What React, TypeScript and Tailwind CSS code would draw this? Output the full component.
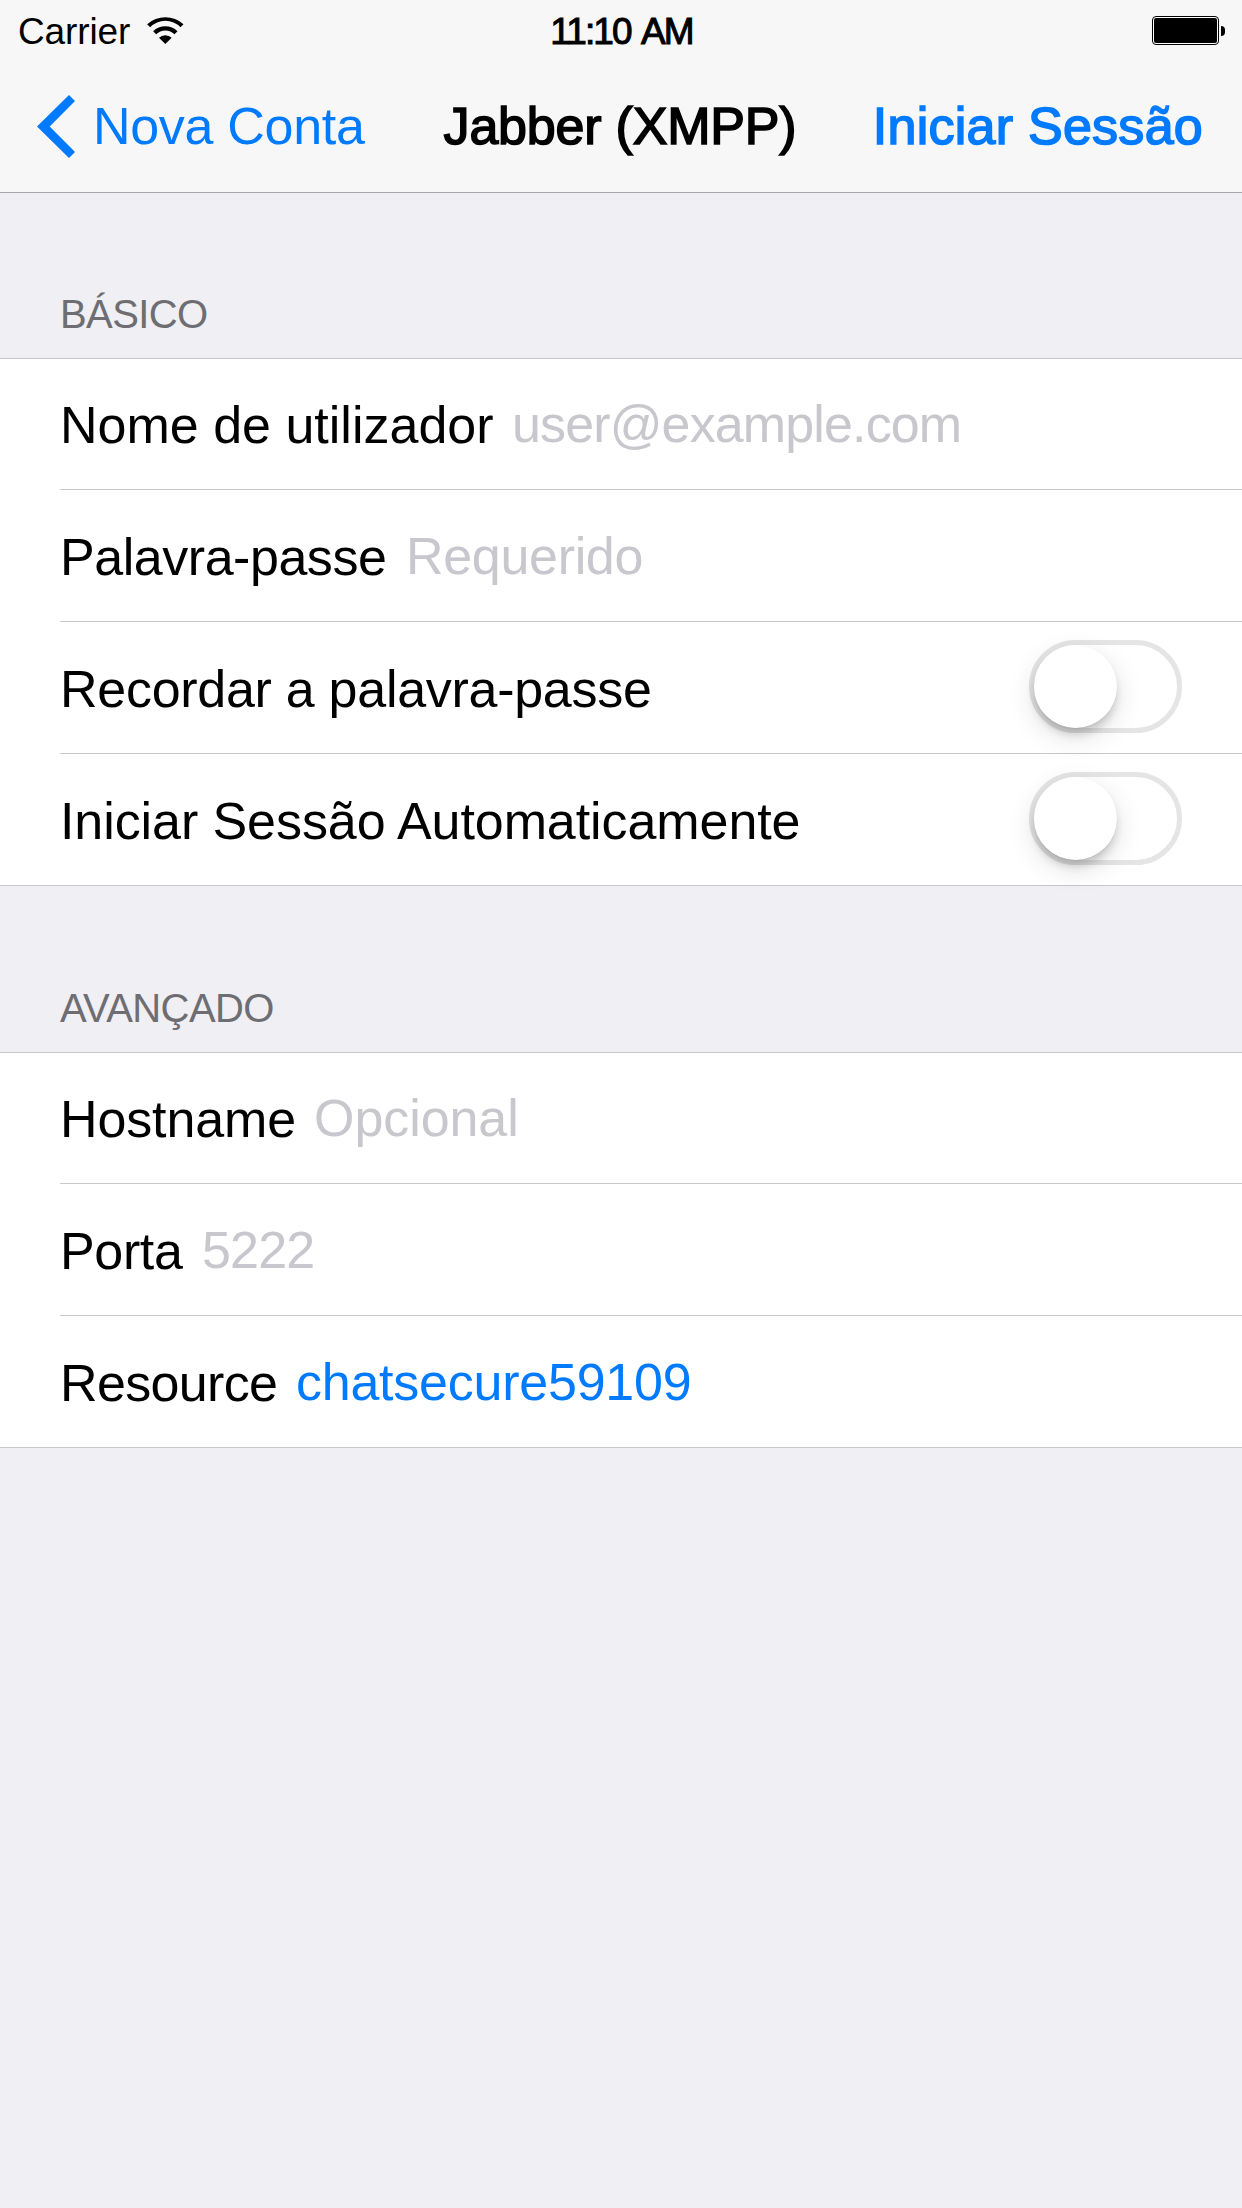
import React from "react";

function WifiIcon() {
  return (
    <svg className="h-[27px] w-[37px]" viewBox="0 0 111 81" aria-hidden="true">
      <path d="M0.5 22 A80 80 0 0 1 109.5 22 L100.5 31 A63 63 0 0 0 9.5 31 Z" />
      <path d="M18.5 43 A51 51 0 0 1 91.5 43 L82.5 52 A38 38 0 0 0 27.5 52 Z" />
      <path d="M36 62.5 A27 27 0 0 1 74 62.5 L55 81 Z" />
    </svg>
  );
}

function Battery() {
  return (
    <div className="flex items-center gap-[2px]">
      <div className="h-[29px] w-[67px] rounded-[4px] border border-black bg-white p-px">
        <div className="h-full w-full rounded-[2px] bg-black" />
      </div>
      <div className="h-[10px] w-[4px] rounded-r-[4px] bg-black" />
    </div>
  );
}

function Switch() {
  return (
    <div
      role="switch"
      aria-checked={false}
      className="mb-[2px] h-[93px] w-[153px] rounded-full border-[5px] border-[#e5e5e5]"
    >
      <div className="h-[83px] w-[83px] rounded-full bg-white shadow-[0_9px_28px_rgba(0,0,0,0.13),0_7px_8px_-1px_rgba(0,0,0,0.16),0_1px_1px_rgba(0,0,0,0.06)]" />
    </div>
  );
}

type RowProps = {
  label: string;
  labelClass: string;
  heightClass?: string;
  value?: string;
  valueClass?: string;
  toggle?: boolean;
  last?: boolean;
};

function Row({ label, labelClass, heightClass = "h-[132px]", value, valueClass = "", toggle, last }: RowProps) {
  return (
    <div className={last ? "border-b border-[#c8c7cc]" : "pl-[60px]"}>
      <div
        className={`flex items-center pr-[60px] ${
          last ? "h-[131px] pl-[60px]" : `${heightClass} border-b border-[#c8c7cc]`
        }`}
      >
        <span className={`shrink-0 pt-[2px] whitespace-nowrap ${labelClass}`}>{label}</span>
        {value && <span className={`whitespace-nowrap ${valueClass}`}>{value}</span>}
        {toggle && (
          <div className="ml-auto">
            <Switch />
          </div>
        )}
      </div>
    </div>
  );
}

function SectionTitle({ children, className }: { children: string; className: string }) {
  return (
    <h2 className={`flex items-end pb-[21px] pl-[60px] text-[40px] leading-[46px] text-[#6d6d72] ${className}`}>
      {children}
    </h2>
  );
}

export default function App() {
  return (
    <div className="min-h-[2208px] w-[1242px] overflow-hidden bg-[#efeff4] font-['Liberation_Sans',Arial,sans-serif] text-[52px] leading-[60px] text-black">
      <header className="h-[193px] border-b border-[#a7a7aa] bg-[#f7f7f7]">
        <div className="grid h-[60px] grid-cols-[1fr_auto_1fr] items-center pr-[17px] pl-[18px] text-[37px] leading-[42px]">
          <div className="flex items-center gap-[17px]">
            <span className="pt-[3px] tracking-[-0.12px]">Carrier</span>
            <WifiIcon />
          </div>
          <span className="pt-[3px] tracking-[-1.9px] [word-spacing:4px] [-webkit-text-stroke:1px_black]">11:10 AM</span>
          <div className="flex justify-end pt-px">
            <Battery />
          </div>
        </div>
        <nav className="grid h-[132px] grid-cols-[1fr_auto_1fr] items-center pr-[39px] pl-[37px]">
          <button className="flex items-center gap-[18px] text-[#007aff]">
            <svg className="h-[63px] w-[38px]" viewBox="0 0 38 63" fill="currentColor" aria-hidden="true">
              <path d="M32 0 L38 6 L12.7 31.5 L38 57 L32 63 L0 31.5 Z" />
            </svg>
            <span className="whitespace-nowrap tracking-[-0.3px]">Nova Conta</span>
          </button>
          <h1 className="tracking-[-0.2px] whitespace-nowrap [-webkit-text-stroke:1.6px_black]">Jabber (XMPP)</h1>
          <button className="justify-self-end whitespace-nowrap text-[#007aff] tracking-[0.26px] [-webkit-text-stroke:1.6px_#007aff]">
            Iniciar Sessão
          </button>
        </nav>
      </header>

      <main>
        <SectionTitle className="h-[165px] tracking-[-0.6px]">BÁSICO</SectionTitle>
        <section className="border-t border-[#c8c7cc] bg-white">
          <Row
            label="Nome de utilizador"
            labelClass="w-[452px]"
            heightClass="h-[131px]"
            value="user@example.com"
            valueClass="text-[#c7c7cd] tracking-[-0.87px]"
          />
          <Row
            label="Palavra-passe"
            labelClass="w-[346px] tracking-[-0.46px]"
            value="Requerido"
            valueClass="text-[#c7c7cd] tracking-[-0.32px]"
          />
          <Row label="Recordar a palavra-passe" labelClass="tracking-[-0.28px]" toggle />
          <Row label="Iniciar Sessão Automaticamente" labelClass="tracking-[-0.08px]" toggle last />
        </section>

        <SectionTitle className="h-[166px] tracking-[-0.6px]">AVANÇADO</SectionTitle>
        <section className="border-t border-[#c8c7cc] bg-white">
          <Row
            label="Hostname"
            labelClass="w-[254px] tracking-[-0.12px]"
            heightClass="h-[131px]"
            value="Opcional"
            valueClass="text-[#c7c7cd] tracking-[-0.07px]"
          />
          <Row
            label="Porta"
            labelClass="w-[142px] tracking-[-0.35px]"
            value="5222"
            valueClass="text-[#c7c7cd] tracking-[-0.8px]"
          />
          <Row
            label="Resource"
            labelClass="w-[236px] tracking-[-0.65px]"
            value="chatsecure59109"
            valueClass="text-[#007aff] tracking-[-0.24px]"
            last
          />
        </section>
      </main>
    </div>
  );
}
